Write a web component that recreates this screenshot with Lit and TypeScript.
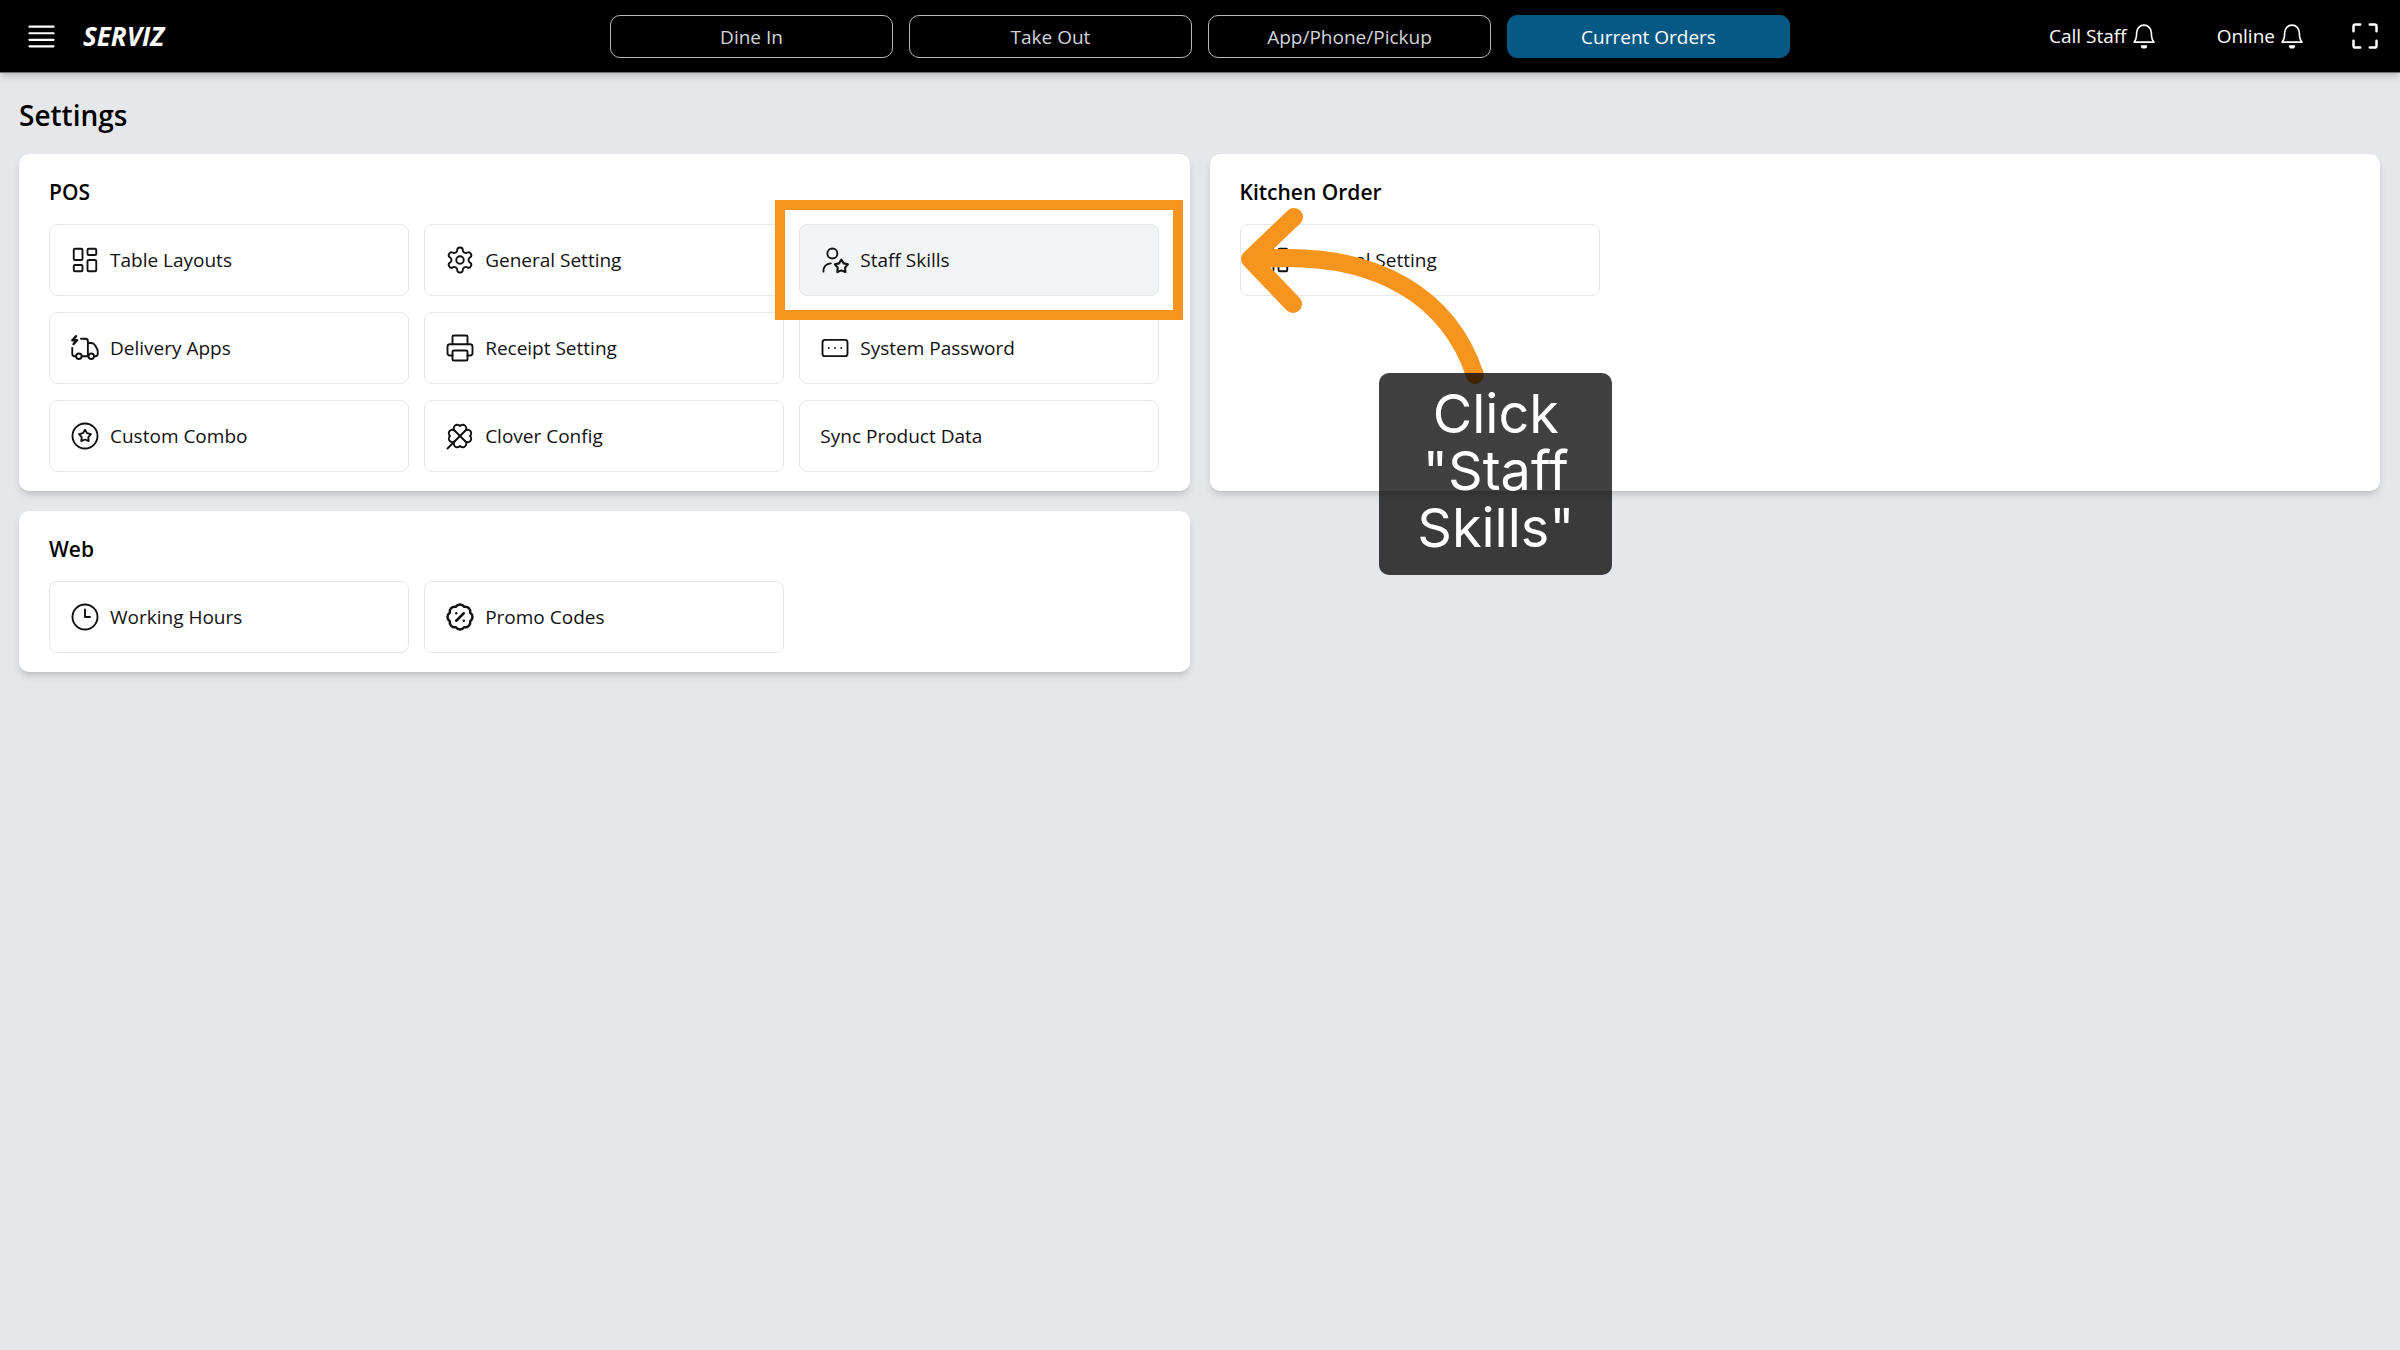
import { LitElement, html, css, svg, nothing, type SVGTemplateResult } from "lit";
import { customElement, property } from "lit/decorators.js";
import { classMap } from "lit/directives/class-map.js";

const star = "M12 7L13.65 9.73L16.76 10.45L14.66 12.87L14.94 16.05L12 14.8L9.06 16.05L9.34 12.87L7.24 10.45L10.35 9.73Z";

const icons: Record<string, SVGTemplateResult> = {
  menu: svg`<path d="M3.75 5.25h16.5m-16.5 4.5h16.5m-16.5 4.5h16.5m-16.5 4.5h16.5"/>`,
  bell: svg`<path d="M2.8 17.6C4.8 15.6 5.2 13.4 5.2 9C5.2 5 8.2 2 12 2s6.8 3 6.8 7c0 4.4.4 6.6 2.4 8.6Z"/><path d="M9.8 21.2h4.4a2.2 1.6 0 0 1-4.4 0Z" fill="currentColor"/>`,
  expand: svg`<path stroke-width="2" d="M2.8 8.2V4.3a1.5 1.5 0 0 1 1.5-1.5h3.9M15.8 2.8h3.9a1.5 1.5 0 0 1 1.5 1.5v3.9M21.2 15.8v3.9a1.5 1.5 0 0 1-1.5 1.5h-3.9M8.2 21.2H4.3a1.5 1.5 0 0 1-1.5-1.5v-3.9"/>`,
  layout: svg`<rect x="3" y="3" width="7" height="9" rx="1"/><rect x="14" y="3" width="7" height="5" rx="1"/><rect x="14" y="12" width="7" height="9" rx="1"/><rect x="3" y="16" width="7" height="5" rx="1"/>`,
  gear: svg`<path d="M12.22 2h-.44a2 2 0 0 0-2 2v.18a2 2 0 0 1-1 1.73l-.43.25a2 2 0 0 1-2 0l-.15-.08a2 2 0 0 0-2.73.73l-.22.38a2 2 0 0 0 .73 2.73l.15.1a2 2 0 0 1 1 1.72v.51a2 2 0 0 1-1 1.74l-.15.09a2 2 0 0 0-.73 2.73l.22.38a2 2 0 0 0 2.73.73l.15-.08a2 2 0 0 1 2 0l.43.25a2 2 0 0 1 1 1.73V20a2 2 0 0 0 2 2h.44a2 2 0 0 0 2-2v-.18a2 2 0 0 1 1-1.73l.43-.25a2 2 0 0 1 2 0l.15.08a2 2 0 0 0 2.73-.73l.22-.39a2 2 0 0 0-.73-2.73l-.15-.08a2 2 0 0 1-1-1.74v-.5a2 2 0 0 1 1-1.74l.15-.09a2 2 0 0 0 .73-2.73l-.22-.38a2 2 0 0 0-2.73-.73l-.15.08a2 2 0 0 1-2 0l-.43-.25a2 2 0 0 1-1-1.73V4a2 2 0 0 0-2-2z"/><circle cx="12" cy="12" r="3"/>`,
  staff: svg`<circle cx="9.9" cy="6.8" r="4"/><path d="M2.7 21.3c0-3.7 2.2-6.3 6-6.6"/><path transform="translate(3.9 4) scale(1.1)" d=${star}/>`,
  truck: svg`<path d="M4.8 2.6 1.9 5.8h3.7L2.9 8.8" stroke-width="2"/><path d="M1.8 12v4.6a2 2 0 0 0 2 2h1M8.8 4.6h3.5a2 2 0 0 1 2 2v12M9.4 18.6h5M14.3 8h2.8c1.5 0 2.2.6 2.9 1.8l1.4 2.4c.6 1 .8 1.6.8 2.6v1.8a2 2 0 0 1-2 2h-.8"/><circle cx="7.1" cy="18.6" r="2.2"/><circle cx="17" cy="18.6" r="2.2"/>`,
  printer: svg`<path d="M6 18H4a2 2 0 0 1-2-2v-5a2 2 0 0 1 2-2h16a2 2 0 0 1 2 2v5a2 2 0 0 1-2 2h-2"/><path d="M6 9V3a1 1 0 0 1 1-1h10a1 1 0 0 1 1 1v6"/><rect x="6" y="14" width="12" height="8" rx="1"/>`,
  password: svg`<rect x="2" y="5.5" width="20" height="13" rx="2"/><path d="M12 12h.01M17 12h.01M7 12h.01"/>`,
  combo: svg`<circle cx="12" cy="12" r="10"/><path d=${star}/>`,
  clover: svg`<path d="M16.17 7.83 2 22"/><path d="M4.02 12a2.827 2.827 0 1 1 3.81-4.17A2.827 2.827 0 1 1 12 4.02a2.827 2.827 0 1 1 4.17 3.81A2.827 2.827 0 1 1 19.98 12a2.827 2.827 0 1 1-3.81 4.17A2.827 2.827 0 1 1 12 19.98a2.827 2.827 0 1 1-4.17-3.81A1 1 0 1 1 4 12"/><path d="m7.83 7.83 8.34 8.34"/>`,
  clock: svg`<circle cx="12" cy="12" r="10"/><path d="M12 6v6h4"/>`,
  promo: svg`<g stroke-width="2"><path d="M3.85 8.62a4 4 0 0 1 4.78-4.77 4 4 0 0 1 6.74 0 4 4 0 0 1 4.78 4.78 4 4 0 0 1 0 6.74 4 4 0 0 1-4.77 4.78 4 4 0 0 1-6.75 0 4 4 0 0 1-4.78-4.77 4 4 0 0 1 0-6.76Z"/><path d="m15 9-6 6M9 9h.01M15 15h.01"/></g>`,
};

@customElement("ui-icon")
export class UiIcon extends LitElement {
  @property() name = "";

  static styles = css`
    :host { display: block; flex: none; width: 30px; height: 30px; }
    svg { display: block; width: 100%; height: 100%; fill: none; stroke: currentColor; stroke-width: 1.5; stroke-linecap: round; stroke-linejoin: round; }
  `;

  render() {
    return html`<svg viewBox="0 0 24 24" aria-hidden="true">${icons[this.name] ?? nothing}</svg>`;
  }
}

interface Item { label: string; icon?: string; guided?: boolean }
interface Section { title: string; items: Item[] }

const sections: Section[] = [
  {
    title: "POS",
    items: [
      { label: "Table Layouts", icon: "layout" },
      { label: "General Setting", icon: "gear" },
      { label: "Staff Skills", icon: "staff", guided: true },
      { label: "Delivery Apps", icon: "truck" },
      { label: "Receipt Setting", icon: "printer" },
      { label: "System Password", icon: "password" },
      { label: "Custom Combo", icon: "combo" },
      { label: "Clover Config", icon: "clover" },
      { label: "Sync Product Data" },
    ],
  },
  { title: "Kitchen Order", items: [{ label: "General Setting", icon: "layout" }] },
  {
    title: "Web",
    items: [
      { label: "Working Hours", icon: "clock" },
      { label: "Promo Codes", icon: "promo" },
    ],
  },
];

const tabs = ["Dine In", "Take Out", "App/Phone/Pickup", "Current Orders"];

@customElement("app-root")
export class AppRoot extends LitElement {
  static styles = css`
    :host {
      display: block;
      min-height: 100vh;
      overflow: hidden;
      background: #e5e7eb;
      color: #000;
      font-family: "Segoe UI", "Open Sans", "Noto Sans", sans-serif;
      font-size: 19px;
      line-height: 28px;
    }
    * { box-sizing: border-box; }
    button { font: inherit; color: inherit; background: none; border: 0; padding: 0; cursor: pointer; }
    h1, h2 { margin: 0; font-weight: 600; }

    .bar {
      display: grid;
      grid-template-columns: 1fr minmax(0, 1180px) 1fr;
      align-items: center;
      height: 73px;
      padding: 0 20px;
      background: #000;
      color: #fff;
      border-bottom: 1px solid #6f7072;
      box-shadow: 0 5px 8px -1px rgb(0 0 0 / 0.12), 0 3px 5px -2px rgb(0 0 0 / 0.1);
    }
    .brand { display: flex; align-items: center; gap: 24px; padding-left: 4px; }
    .menu ui-icon { width: 35px; height: 35px; }
    .logo { color: inherit; text-decoration: none; font-size: 26px; font-weight: 700; font-style: italic; }
    .tabs { display: grid; grid-template-columns: repeat(4, 1fr); gap: 16px; }
    .tab { height: 43px; padding-top: 1px; border: 1px solid #b9b9b9; border-radius: 10px; color: #d1d5db; }
    .tab.active { background: #075985; border-color: #075985; color: #fff; }
    .status { display: flex; align-items: center; justify-content: flex-end; }
    .call { display: flex; align-items: center; gap: 4px; margin-right: 60px; }
    .call:nth-child(2) { margin-right: 45px; }
    .call ui-icon { width: 26px; height: 26px; }

    main { padding: 22px 20px 40px 19px; }
    h1 { font-size: 28px; line-height: 40px; margin-bottom: 19px; }
    .panels { display: grid; grid-template-columns: repeat(2, minmax(0, 1fr)); gap: 20px; }
    .panel {
      padding: 23px 30px 19px;
      background: #fff;
      border-radius: 10px;
      box-shadow: 0 5px 8px -1px rgb(0 0 0 / 0.12), 0 3px 5px -2px rgb(0 0 0 / 0.1);
    }
    h2 { font-size: 21px; line-height: 30px; margin-bottom: 17px; }
    .items { display: grid; grid-template-columns: repeat(3, minmax(0, 1fr)); gap: 16px 15px; }
    .cell { position: relative; }
    .item {
      display: flex;
      align-items: center;
      gap: 10px;
      width: 100%;
      height: 72px;
      padding: 0 20px;
      border: 1px solid #e5e7eb;
      border-radius: 8px;
      color: #111;
      text-align: left;
    }
    .item.hover { background: #f3f4f6; }

    .ring { position: absolute; inset: -24px; border: 10px solid #f7941d; z-index: 2; pointer-events: none; }
    .arrow { position: absolute; left: 431px; top: -26px; width: 270px; height: 200px; z-index: 2; pointer-events: none; fill: none; stroke: #f7941d; stroke-width: 18; stroke-linecap: round; stroke-linejoin: round; }
    .tip {
      position: absolute;
      left: 580px;
      top: 149px;
      width: 233px;
      padding: 12px 24px 19px;
      border-radius: 10px;
      background: rgb(0 0 0 / 0.75);
      color: #fff;
      font-family: Inter, sans-serif;
      font-size: 54px;
      line-height: 57px;
      text-align: center;
      z-index: 3;
    }
  `;

  private renderGuide() {
    return html`
      <div class="ring"></div>
      <svg class="arrow" viewBox="0 0 270 200" aria-hidden="true">
        <path d="M245 177C220 102 150 52 30 61" />
        <path d="M64 19L20 61L63 106" />
      </svg>
      <div class="tip" role="tooltip">Click "Staff Skills"</div>
    `;
  }

  private renderItem(item: Item) {
    return html`
      <div class="cell">
        <button class=${classMap({ item: true, hover: !!item.guided })}>
          ${item.icon ? html`<ui-icon name=${item.icon}></ui-icon>` : nothing}
          <span>${item.label}</span>
        </button>
        ${item.guided ? this.renderGuide() : nothing}
      </div>
    `;
  }

  render() {
    return html`
      <header class="bar">
        <div class="brand">
          <button class="menu" aria-label="Menu"><ui-icon name="menu"></ui-icon></button>
          <a class="logo" href="#">SERVIZ</a>
        </div>
        <nav class="tabs">
          ${tabs.map((t, i) => html`<button class=${classMap({ tab: true, active: i === 3 })}>${t}</button>`)}
        </nav>
        <div class="status">
          <button class="call">Call Staff<ui-icon name="bell"></ui-icon></button>
          <button class="call">Online<ui-icon name="bell"></ui-icon></button>
          <button aria-label="Full screen"><ui-icon name="expand"></ui-icon></button>
        </div>
      </header>
      <main>
        <h1>Settings</h1>
        <div class="panels">
          ${sections.map((s) => html`
            <section class="panel">
              <h2>${s.title}</h2>
              <div class="items">${s.items.map((i) => this.renderItem(i))}</div>
            </section>
          `)}
        </div>
      </main>
    `;
  }
}
